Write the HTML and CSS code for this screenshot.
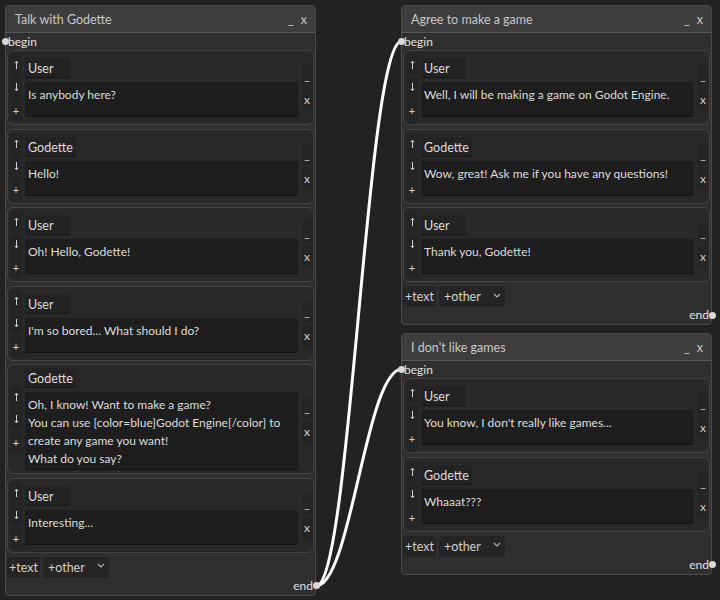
FILE: index.html
```html
<!DOCTYPE html>
<html>
<head>
    <title>Dialogue Graph</title>
    <link rel="stylesheet" href="styles.css">
</head>
<body>
    <div class="canvas">
        <svg class="wires" width="720" height="600" viewBox="0 0 720 600">
            <path d="M316 586 C351 586 366 41 402 41"></path>
            <path d="M316 586 C351 586 366 369 402 369"></path>
        </svg>

        <div class="node node-talk">
            <div class="node-title">
                <span>Talk with Godette</span>
                <span class="title-btns"><span>_</span><span>x</span></span>
            </div>
            <div class="node-body">
                <div class="slot slot-in"><span class="port"></span>begin</div>
                <div class="lines">
                    <div class="line">
                        <div class="line-move">
                            <button><svg width="5" height="9" viewBox="0 0 5 9"><path d="M2.5 1.5V9M0.8 3.2L2.5 1.2 4.2 3.2"></path></svg></button>
                            <button><svg width="5" height="9" viewBox="0 0 5 9"><path d="M2.5 0V7.5M0.8 5.8L2.5 7.8 4.2 5.8"></path></svg></button>
                            <button>+</button>
                        </div>
                        <div class="line-main"><div class="speaker">User</div><div class="text">Is anybody here?</div></div>
                        <div class="line-tools"><button>_</button><button>x</button></div>
                    </div>
                    <div class="line">
                        <div class="line-move">
                            <button><svg width="5" height="9" viewBox="0 0 5 9"><path d="M2.5 1.5V9M0.8 3.2L2.5 1.2 4.2 3.2"></path></svg></button>
                            <button><svg width="5" height="9" viewBox="0 0 5 9"><path d="M2.5 0V7.5M0.8 5.8L2.5 7.8 4.2 5.8"></path></svg></button>
                            <button>+</button>
                        </div>
                        <div class="line-main"><div class="speaker">Godette</div><div class="text">Hello!</div></div>
                        <div class="line-tools"><button>_</button><button>x</button></div>
                    </div>
                    <div class="line">
                        <div class="line-move">
                            <button><svg width="5" height="9" viewBox="0 0 5 9"><path d="M2.5 1.5V9M0.8 3.2L2.5 1.2 4.2 3.2"></path></svg></button>
                            <button><svg width="5" height="9" viewBox="0 0 5 9"><path d="M2.5 0V7.5M0.8 5.8L2.5 7.8 4.2 5.8"></path></svg></button>
                            <button>+</button>
                        </div>
                        <div class="line-main"><div class="speaker">User</div><div class="text">Oh! Hello, Godette!</div></div>
                        <div class="line-tools"><button>_</button><button>x</button></div>
                    </div>
                    <div class="line">
                        <div class="line-move">
                            <button><svg width="5" height="9" viewBox="0 0 5 9"><path d="M2.5 1.5V9M0.8 3.2L2.5 1.2 4.2 3.2"></path></svg></button>
                            <button><svg width="5" height="9" viewBox="0 0 5 9"><path d="M2.5 0V7.5M0.8 5.8L2.5 7.8 4.2 5.8"></path></svg></button>
                            <button>+</button>
                        </div>
                        <div class="line-main"><div class="speaker">User</div><div class="text">I'm so bored... What should I do?</div></div>
                        <div class="line-tools"><button>_</button><button>x</button></div>
                    </div>
                    <div class="line">
                        <div class="line-move">
                            <button><svg width="5" height="9" viewBox="0 0 5 9"><path d="M2.5 1.5V9M0.8 3.2L2.5 1.2 4.2 3.2"></path></svg></button>
                            <button><svg width="5" height="9" viewBox="0 0 5 9"><path d="M2.5 0V7.5M0.8 5.8L2.5 7.8 4.2 5.8"></path></svg></button>
                            <button>+</button>
                        </div>
                        <div class="line-main">
                            <div class="speaker">Godette</div>
                            <div class="text">Oh, I know! Want to make a game?<br>You can use [color=blue]Godot Engine[/color] to<br>create any game you want!<br>What do you say?</div>
                        </div>
                        <div class="line-tools"><button>_</button><button>x</button></div>
                    </div>
                    <div class="line">
                        <div class="line-move">
                            <button><svg width="5" height="9" viewBox="0 0 5 9"><path d="M2.5 1.5V9M0.8 3.2L2.5 1.2 4.2 3.2"></path></svg></button>
                            <button><svg width="5" height="9" viewBox="0 0 5 9"><path d="M2.5 0V7.5M0.8 5.8L2.5 7.8 4.2 5.8"></path></svg></button>
                            <button>+</button>
                        </div>
                        <div class="line-main"><div class="speaker">User</div><div class="text">Interesting...</div></div>
                        <div class="line-tools"><button>_</button><button>x</button></div>
                    </div>
                </div>
                <div class="node-actions">
                    <button>+text</button>
                    <button class="select">+other
                        <svg width="8" height="5" viewBox="0 0 8 5" fill="none" stroke="currentColor" stroke-width="1.2"><path d="M1 1l3 3 3-3"></path></svg>
                    </button>
                </div>
                <div class="slot slot-out">end<span class="port"></span></div>
            </div>
        </div>

        <div class="node node-agree">
            <div class="node-title">
                <span>Agree to make a game</span>
                <span class="title-btns"><span>_</span><span>x</span></span>
            </div>
            <div class="node-body">
                <div class="slot slot-in"><span class="port"></span>begin</div>
                <div class="lines">
                    <div class="line">
                        <div class="line-move">
                            <button><svg width="5" height="9" viewBox="0 0 5 9"><path d="M2.5 1.5V9M0.8 3.2L2.5 1.2 4.2 3.2"></path></svg></button>
                            <button><svg width="5" height="9" viewBox="0 0 5 9"><path d="M2.5 0V7.5M0.8 5.8L2.5 7.8 4.2 5.8"></path></svg></button>
                            <button>+</button>
                        </div>
                        <div class="line-main"><div class="speaker">User</div><div class="text">Well, I will be making a game on Godot Engine.</div></div>
                        <div class="line-tools"><button>_</button><button>x</button></div>
                    </div>
                    <div class="line">
                        <div class="line-move">
                            <button><svg width="5" height="9" viewBox="0 0 5 9"><path d="M2.5 1.5V9M0.8 3.2L2.5 1.2 4.2 3.2"></path></svg></button>
                            <button><svg width="5" height="9" viewBox="0 0 5 9"><path d="M2.5 0V7.5M0.8 5.8L2.5 7.8 4.2 5.8"></path></svg></button>
                            <button>+</button>
                        </div>
                        <div class="line-main"><div class="speaker">Godette</div><div class="text">Wow, great! Ask me if you have any questions!</div></div>
                        <div class="line-tools"><button>_</button><button>x</button></div>
                    </div>
                    <div class="line">
                        <div class="line-move">
                            <button><svg width="5" height="9" viewBox="0 0 5 9"><path d="M2.5 1.5V9M0.8 3.2L2.5 1.2 4.2 3.2"></path></svg></button>
                            <button><svg width="5" height="9" viewBox="0 0 5 9"><path d="M2.5 0V7.5M0.8 5.8L2.5 7.8 4.2 5.8"></path></svg></button>
                            <button>+</button>
                        </div>
                        <div class="line-main"><div class="speaker">User</div><div class="text">Thank you, Godette!</div></div>
                        <div class="line-tools"><button>_</button><button>x</button></div>
                    </div>
                </div>
                <div class="node-actions">
                    <button>+text</button>
                    <button class="select">+other
                        <svg width="8" height="5" viewBox="0 0 8 5" fill="none" stroke="currentColor" stroke-width="1.2"><path d="M1 1l3 3 3-3"></path></svg>
                    </button>
                </div>
                <div class="slot slot-out">end<span class="port"></span></div>
            </div>
        </div>

        <div class="node node-dislike">
            <div class="node-title">
                <span>I don't like games</span>
                <span class="title-btns"><span>_</span><span>x</span></span>
            </div>
            <div class="node-body">
                <div class="slot slot-in"><span class="port"></span>begin</div>
                <div class="lines">
                    <div class="line">
                        <div class="line-move">
                            <button><svg width="5" height="9" viewBox="0 0 5 9"><path d="M2.5 1.5V9M0.8 3.2L2.5 1.2 4.2 3.2"></path></svg></button>
                            <button><svg width="5" height="9" viewBox="0 0 5 9"><path d="M2.5 0V7.5M0.8 5.8L2.5 7.8 4.2 5.8"></path></svg></button>
                            <button>+</button>
                        </div>
                        <div class="line-main"><div class="speaker">User</div><div class="text">You know, I don't really like games...</div></div>
                        <div class="line-tools"><button>_</button><button>x</button></div>
                    </div>
                    <div class="line">
                        <div class="line-move">
                            <button><svg width="5" height="9" viewBox="0 0 5 9"><path d="M2.5 1.5V9M0.8 3.2L2.5 1.2 4.2 3.2"></path></svg></button>
                            <button><svg width="5" height="9" viewBox="0 0 5 9"><path d="M2.5 0V7.5M0.8 5.8L2.5 7.8 4.2 5.8"></path></svg></button>
                            <button>+</button>
                        </div>
                        <div class="line-main"><div class="speaker">Godette</div><div class="text">Whaaat???</div></div>
                        <div class="line-tools"><button>_</button><button>x</button></div>
                    </div>
                </div>
                <div class="node-actions">
                    <button>+text</button>
                    <button class="select">+other
                        <svg width="8" height="5" viewBox="0 0 8 5" fill="none" stroke="currentColor" stroke-width="1.2"><path d="M1 1l3 3 3-3"></path></svg>
                    </button>
                </div>
                <div class="slot slot-out">end<span class="port"></span></div>
            </div>
        </div>
    </div>
</body>
</html>
```

FILE: styles.css
```css
body {
    margin: 0;
    padding: 0;
    background-color: #222222;
    color: #dcdcdc;
    font-family: Lato, "Noto Sans", sans-serif;
    font-size: 12px;
    overflow: hidden;
}
.canvas {
    position: relative;
    width: 720px;
    height: 600px;
}
.wires {
    position: absolute;
    left: 0;
    top: 0;
}
.wires path {
    fill: none;
    stroke: #ffffff;
    stroke-width: 3;
    stroke-linecap: round;
}

/* nodes sit on a free canvas */
.node {
    position: absolute;
    width: 311px;
    box-sizing: border-box;
    background-color: #2f2f2f;
    border: 1px solid #4a4a4a;
    border-radius: 4px;
}
.node-talk {
    left: 5px;
    top: 5px;
}
.node-agree {
    left: 401px;
    top: 5px;
}
.node-dislike {
    left: 401px;
    top: 333px;
}
.node-title {
    height: 26px;
    display: flex;
    align-items: center;
    justify-content: space-between;
    padding: 0 8px 0 9px;
    background-color: #3d3d3d;
    border-bottom: 1px solid #575757;
    border-radius: 3px 3px 0 0;
    color: #c8c8c8;
    font-size: 12.5px;
}
.title-btns {
    display: flex;
    gap: 7px;
}
.node-body {
    padding: 0 1px 1px;
}
.slot {
    position: relative;
    height: 17px;
    line-height: 17px;
    color: #e0e0e0;
    padding-left: 1px;
}
.slot-out {
    height: 16px;
    line-height: 16px;
    text-align: right;
    padding: 0 1px 0 0;
}
.port {
    position: absolute;
    top: 50%;
    width: 7px;
    height: 7px;
    margin-top: -3.5px;
    border-radius: 50%;
    background-color: #d8d8d8;
}
.slot-in .port {
    left: -5.5px;
}
.slot-out .port {
    right: -5.5px;
}

.lines {
    display: flex;
    flex-direction: column;
    gap: 3.5px;
}
.line {
    display: flex;
    align-items: center;
    gap: 3px;
    padding: 3px 1px 3px 2px;
    background-color: #292929;
    border: 1px solid #444444;
    border-radius: 6px;
}
button {
    font-family: inherit;
    font-size: 12px;
    color: #d0d0d0;
    background-color: #252525;
    border: none;
    border-radius: 3px;
    padding: 0;
    margin: 0;
    cursor: pointer;
}
.line-move {
    display: flex;
    flex-direction: column;
    gap: 2px;
}
.line-move button {
    width: 12px;
    height: 21px;
    font-size: 11px;
    display: flex;
    align-items: center;
    justify-content: center;
}
.line-move svg path {
    fill: none;
    stroke: #cfcfcf;
    stroke-width: 1;
}
.line-main {
    flex: 1;
    display: flex;
    flex-direction: column;
    align-items: flex-start;
    gap: 4px;
}
.speaker {
    min-width: 45px;
    height: 20px;
    line-height: 19px;
    padding: 1px 3px 0;
    box-sizing: border-box;
    background-color: #232323;
    border-bottom: 1px solid #161616;
    border-radius: 2px;
    font-size: 12.5px;
}
.text {
    align-self: stretch;
    min-height: 35px;
    box-sizing: border-box;
    padding: 4px 4px 1px 3px;
    line-height: 18px;
    white-space: nowrap;
    background-color: #1e1e1e;
    border-bottom: 1px solid #141414;
    border-radius: 2px;
}
.line-tools {
    display: flex;
    flex-direction: column;
    gap: 3px;
    margin-left: 1px;
}
.line-tools button {
    width: 10px;
    height: 21px;
    font-size: 12px;
}

.node-actions {
    display: flex;
    gap: 3px;
    margin-top: 4px;
}
.node-actions button {
    height: 21px;
    padding: 0 2px;
    font-size: 12.5px;
}
.node-actions .select {
    width: 66px;
    display: flex;
    align-items: center;
    justify-content: space-between;
    padding: 0 4px 0 5px;
}
.select svg {
    margin-top: -3px;
    color: #b0b0b0;
}
```
